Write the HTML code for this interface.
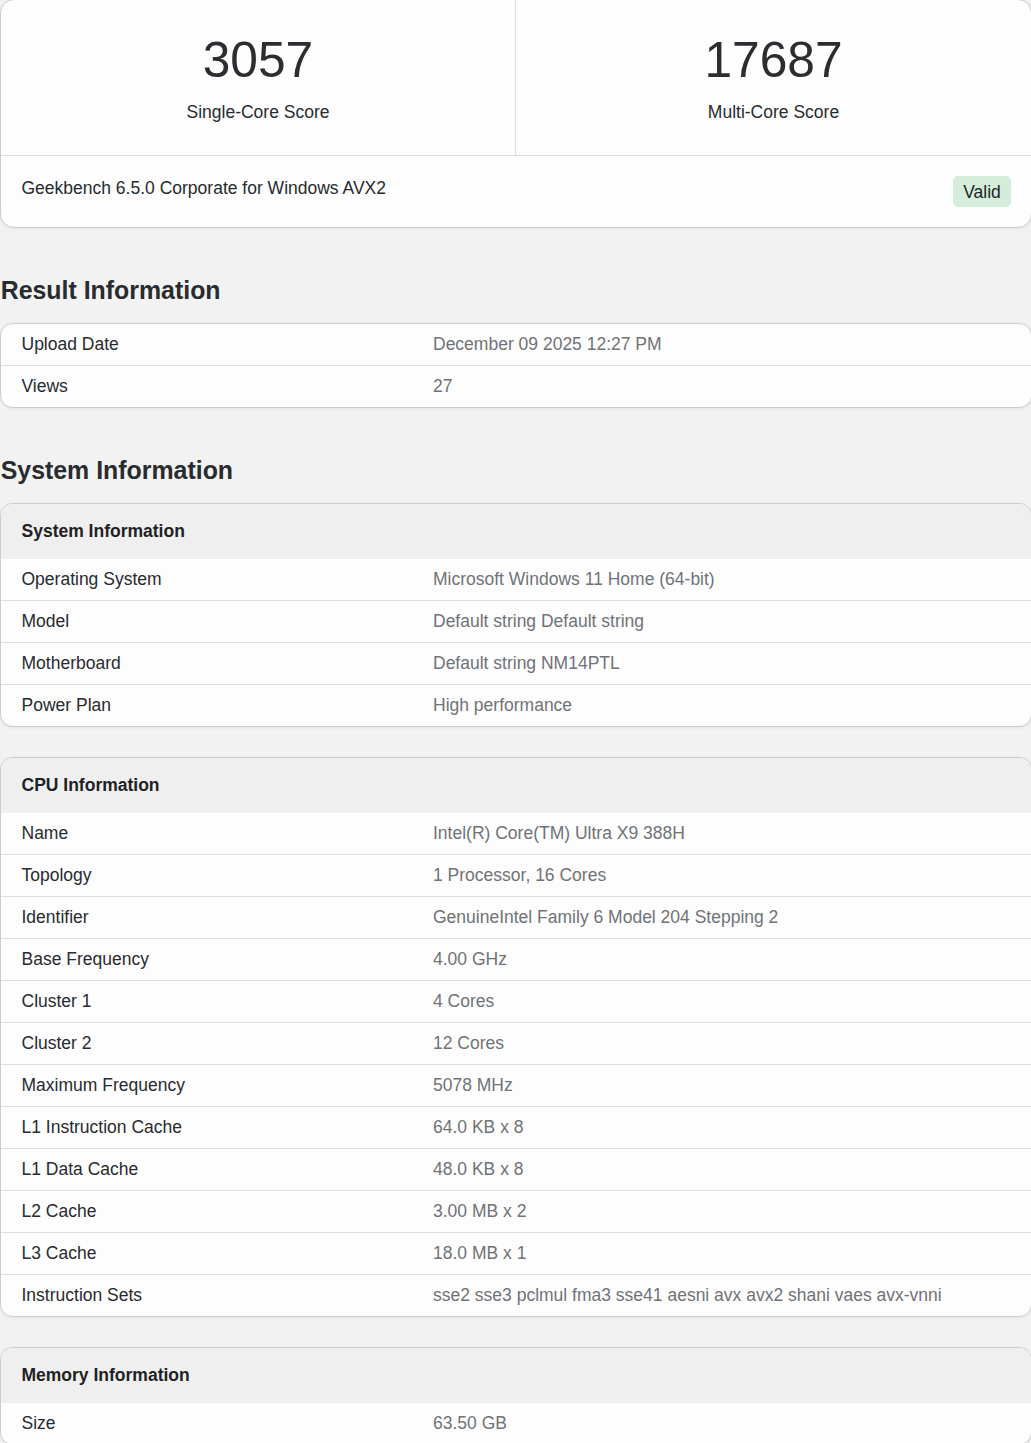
<!DOCTYPE html>
<html><head><meta charset="utf-8">
<style>
*{box-sizing:border-box}
html,body{margin:0;padding:0}
body{width:1031px;height:1443px;overflow:hidden;background:#f2f2f2;font-family:"Liberation Sans",sans-serif;font-size:17.5px;color:#282b2f;line-height:1.5}
.card{position:absolute;left:0;width:1032px;background:#fdfdfd;border:1px solid #cbcbcb;border-radius:12.5px;box-shadow:0 1px 4px rgba(0,0,0,.055);overflow:hidden}
h2{position:absolute;left:0.7px;margin:0;font-size:24.9px;font-weight:bold;line-height:30px;color:#292b2e}
.row{height:42px;border-top:1px solid #dedede;display:flex;align-items:center;font-size:17.5px}
.row:first-child{border-top:none;height:41px}
.row .k{width:432px;padding-left:20.5px;color:#282b2f}
.row .v{color:#6f7377}
.hd{height:55px;background:#efefef;font-weight:bold;color:#1f2225;padding-left:20.5px;display:flex;align-items:center;font-size:17.5px}
.hd + .row{border-top:none;height:41px}
#score{top:-1px;height:229px;border-radius:14px}
.sc{position:absolute;top:0;height:156px;width:515px;text-align:center}
.sc .n{position:absolute;left:0;right:0;top:30px;font-size:49.7px;line-height:60px;color:#2b2d31}
.sc .l{position:absolute;left:0;right:0;top:99px;font-size:17.5px;line-height:26px}
</style></head><body>
<div class="card" id="score">
 <div class="sc" style="left:0;border-right:1px solid #dedede"><div class="n">3057</div><div class="l">Single-Core Score</div></div>
 <div class="sc" style="left:515px"><div class="n">17687</div><div class="l">Multi-Core Score</div></div>
 <div style="position:absolute;left:0;right:0;top:155px;border-top:1px solid #dedede;height:72px">
  <div style="position:absolute;left:20.5px;top:19px;line-height:26px">Geekbench 6.5.0 Corporate for Windows AVX2</div>
  <div style="position:absolute;right:20px;top:20px;height:31px;width:58px;background:#d4edda;border-radius:5px;text-align:center;line-height:33px;color:#212529">Valid</div>
 </div>
</div>
<h2 style="top:275px">Result Information</h2>
<div class="card" style="top:323px">
 <div class="row"><div class="k">Upload Date</div><div class="v">December 09 2025 12:27 PM</div></div>
 <div class="row"><div class="k">Views</div><div class="v">27</div></div>
</div>
<h2 style="top:455px">System Information</h2>
<div class="card" style="top:503px">
 <div class="hd">System Information</div>
 <div class="row"><div class="k">Operating System</div><div class="v">Microsoft Windows 11 Home (64-bit)</div></div>
 <div class="row"><div class="k">Model</div><div class="v">Default string Default string</div></div>
 <div class="row"><div class="k">Motherboard</div><div class="v">Default string NM14PTL</div></div>
 <div class="row"><div class="k">Power Plan</div><div class="v">High performance</div></div>
</div>
<div class="card" style="top:757px">
 <div class="hd">CPU Information</div>
 <div class="row"><div class="k">Name</div><div class="v">Intel(R) Core(TM) Ultra X9 388H</div></div>
 <div class="row"><div class="k">Topology</div><div class="v">1 Processor, 16 Cores</div></div>
 <div class="row"><div class="k">Identifier</div><div class="v">GenuineIntel Family 6 Model 204 Stepping 2</div></div>
 <div class="row"><div class="k">Base Frequency</div><div class="v">4.00 GHz</div></div>
 <div class="row"><div class="k">Cluster 1</div><div class="v">4 Cores</div></div>
 <div class="row"><div class="k">Cluster 2</div><div class="v">12 Cores</div></div>
 <div class="row"><div class="k">Maximum Frequency</div><div class="v">5078 MHz</div></div>
 <div class="row"><div class="k">L1 Instruction Cache</div><div class="v">64.0 KB x 8</div></div>
 <div class="row"><div class="k">L1 Data Cache</div><div class="v">48.0 KB x 8</div></div>
 <div class="row"><div class="k">L2 Cache</div><div class="v">3.00 MB x 2</div></div>
 <div class="row"><div class="k">L3 Cache</div><div class="v">18.0 MB x 1</div></div>
 <div class="row"><div class="k">Instruction Sets</div><div class="v">sse2 sse3 pclmul fma3 sse41 aesni avx avx2 shani vaes avx-vnni</div></div>
</div>
<div class="card" style="top:1347px">
 <div class="hd">Memory Information</div>
 <div class="row"><div class="k">Size</div><div class="v">63.50 GB</div></div>
</div>
</body></html>
